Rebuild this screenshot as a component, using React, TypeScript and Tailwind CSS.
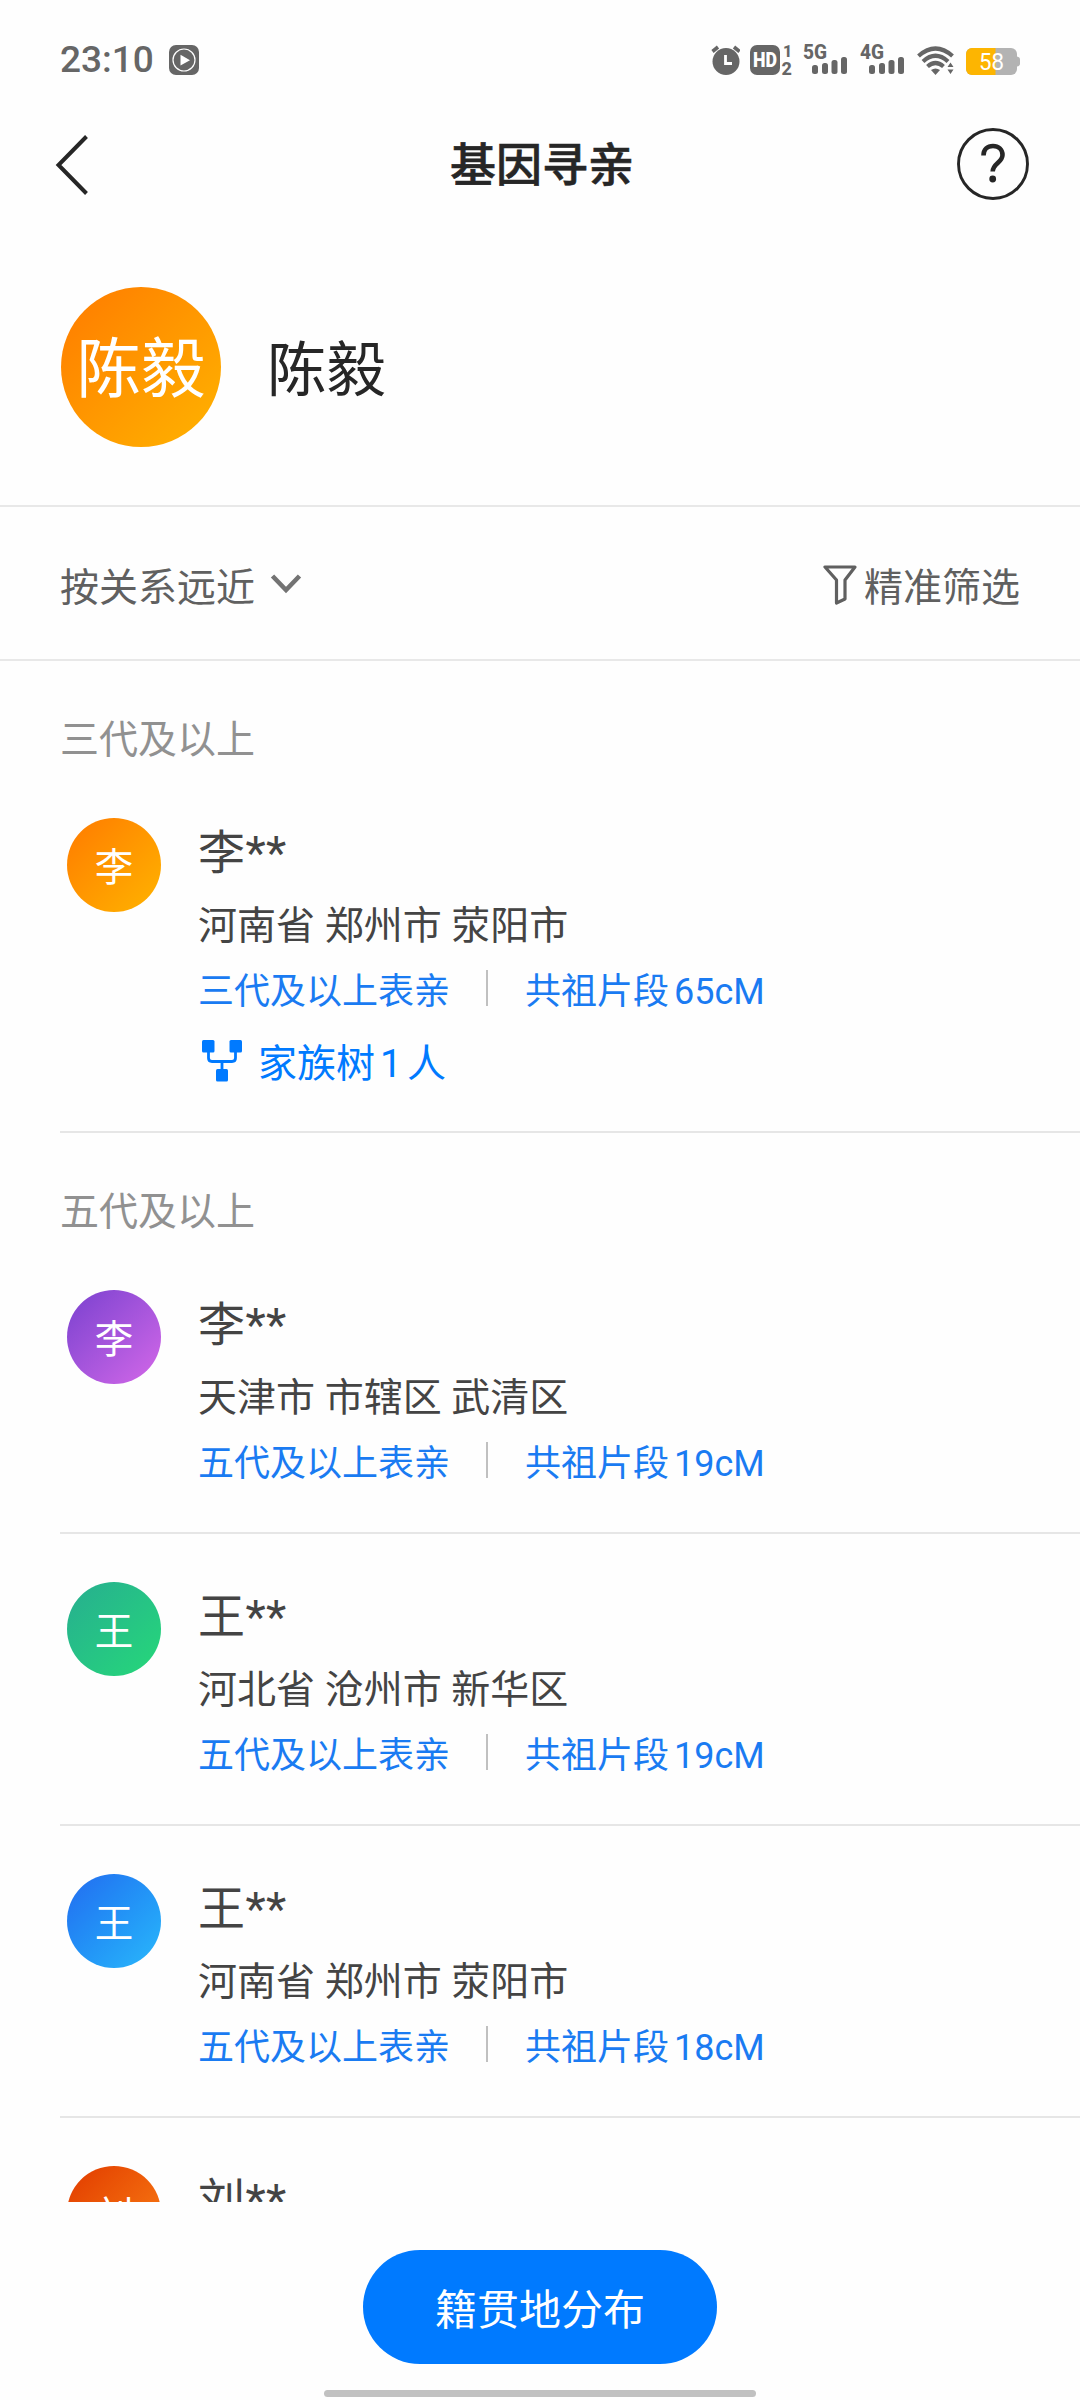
import React from 'react';

type Relative = {
  initial: string;
  name: string;
  place?: string;
  relation?: string;
  segment?: string;
  gradient: string;
  tree?: number;
};

const thirdGeneration: Relative[] = [
  {
    initial: '李',
    name: '李**',
    place: '河南省 郑州市 荥阳市',
    relation: '三代及以上表亲',
    segment: '65cM',
    gradient: 'from-[#ff7a00] to-[#ffb300]',
    tree: 1,
  },
];

const fifthGeneration: Relative[] = [
  {
    initial: '李',
    name: '李**',
    place: '天津市 市辖区 武清区',
    relation: '五代及以上表亲',
    segment: '19cM',
    gradient: 'from-[#7a40cf] to-[#d467e8]',
  },
  {
    initial: '王',
    name: '王**',
    place: '河北省 沧州市 新华区',
    relation: '五代及以上表亲',
    segment: '19cM',
    gradient: 'from-[#27ae8f] to-[#26d878]',
  },
  {
    initial: '王',
    name: '王**',
    place: '河南省 郑州市 荥阳市',
    relation: '五代及以上表亲',
    segment: '18cM',
    gradient: 'from-[#246bf0] to-[#2bb8fb]',
  },
  {
    initial: '刘',
    name: '刘**',
    gradient: 'from-[#e13800] to-[#fb8015]',
  },
];

function Signal({ label }: { label: string }) {
  return (
    <svg className="h-[32px] w-[46px] overflow-visible" viewBox="0 0 46 32" fill="#666">
      <text x="0" y="16" fontSize="21" fontWeight="800" fontFamily="Roboto, sans-serif" textLength="24" lengthAdjust="spacingAndGlyphs">
        {label}
      </text>
      <rect x="9" y="22" width="6" height="9" rx="2.5" />
      <rect x="19" y="20" width="6" height="11" rx="2.5" />
      <rect x="28.5" y="17" width="6" height="14" rx="2.5" />
      <rect x="38" y="14" width="6" height="17" rx="2.5" />
    </svg>
  );
}

function StatusBar() {
  return (
    <div className="flex h-[120px] items-start justify-between pt-[43px] pl-[60px] pr-[60px]">
      <div className="flex items-center">
        <span className="w-[109px] text-[37px] leading-[34px] font-medium text-[#666]">23:10</span>
        <svg className="h-[30px] w-[30px]" viewBox="0 0 30 30">
          <rect width="30" height="30" rx="7" fill="#666" />
          <circle cx="15" cy="15" r="11" fill="none" stroke="#fff" strokeWidth="1.2" />
          <path d="M11.5 9.8v10.8l9.5-5.4z" fill="#fff" />
        </svg>
      </div>
      <div className="flex items-start">
        {/* alarm */}
        <svg className="mr-[9px] h-[32px] w-[30px]" viewBox="0 0 30 32">
          <circle cx="16" cy="18.5" r="13.5" fill="#666" />
          <path d="M2.5 8.5L8 4M29.5 8.5L24 4" stroke="#666" strokeWidth="3.6" />
          <path d="M15.5 12v8.500h6.500" fill="none" stroke="#fff" strokeWidth="2.8" />
        </svg>
        {/* HD voice */}
        <svg className="mr-[11px] h-[32px] w-[43px] overflow-visible" viewBox="0 0 43 32">
          <rect x="1" y="2" width="30" height="30" rx="7" fill="#666" />
          <text x="4" y="24" fontSize="19.5" fontWeight="900" fill="#fff" fontFamily="Roboto, sans-serif" textLength="24" lengthAdjust="spacingAndGlyphs">
            HD
          </text>
          <text x="34" y="14" fontSize="16" fontWeight="800" fill="#666" fontFamily="Roboto, sans-serif">1</text>
          <text x="32.5" y="31.5" fontSize="18" fontWeight="800" fill="#666" fontFamily="Roboto, sans-serif">2</text>
        </svg>
        <div className="mr-[11px]">
          <Signal label="5G" />
        </div>
        <div className="mr-[11px]">
          <Signal label="4G" />
        </div>
        <svg className="mr-[11px] h-[32px] w-[38px]" viewBox="0 0 38 32">
          <g fill="none" stroke="#666" strokeWidth="4.2">
            <path d="M1.5 13Q18.5-2 35.500 13" />
            <path d="M6 18.500Q18.500 7 31 18.500" />
            <path d="M10.500 23.500Q18.500 16.500 26.500 23.500" />
          </g>
          <path d="M14 27q4.500-3 9 0l-4.500 5z" fill="#666" />
          <path d="M30.500 24l3-4.500 3 4.500zM30.500 26.500h6l-3 4.500z" fill="#666" />
        </svg>
        <svg className="mt-[4px] h-[29px] w-[54px] overflow-visible" viewBox="0 0 54 29">
          <rect x="0" y="1" width="51" height="27" rx="6" fill="#b3b3b3" />
          <path d="M6 1h23.500v27H6a6 6 0 0 1-6-6V7a6 6 0 0 1 6-6z" fill="#fdb501" />
          <path d="M51 9.500q3 .5 3 3v4q0 2.500-3 3z" fill="#b3b3b3" />
          <text x="25.500" y="23" fontSize="24" textAnchor="middle" textLength="25" lengthAdjust="spacingAndGlyphs" fill="#fff" fontFamily="Roboto, sans-serif">58</text>
        </svg>
      </div>
    </div>
  );
}

function TreeIcon() {
  return (
    <svg className="mt-px h-[42px] w-[40px]" viewBox="0 0 40 42" fill="#007aff">
      <rect x="0" y="0" width="12.500" height="12.500" rx="1.500" />
      <rect x="27.500" y="0" width="12.500" height="12.500" rx="1.500" />
      <rect x="14" y="29" width="12" height="12.500" rx="1.500" />
      <path d="M6.500 12v6q0 3.500 3.500 3.500h20q3.500 0 3.500-3.500v-6M20 21.500V30" fill="none" stroke="#007aff" strokeWidth="2.800" />
    </svg>
  );
}

function RelativeRow({ person }: { person: Relative }) {
  return (
    <div className="flex h-[243px] pl-[67px] pt-[48px]">
      <div className={`flex h-[94px] w-[94px] shrink-0 items-center justify-center rounded-full bg-linear-to-br pt-[6px] text-[38.500px] leading-[54px] text-white ${person.gradient}`}>
        <span>{person.initial}</span>
      </div>
      <div className="ml-[37px] pt-[5px] text-[#444]">
        <p className="h-[73px] text-[47px] leading-[60px] tracking-[0.4px]">{person.name}</p>
        {person.place && <p className="h-[68px] text-[39px] leading-[60px]">{person.place}</p>}
        {person.relation && (
          <div className="flex h-[51px] items-center text-[36px] leading-[50px] text-[#1a7bf2]">
            <span className="pt-[4px]">{person.relation}</span>
            <span className="mr-[37px] mb-[3px] ml-[36px] h-[36px] w-[2px] bg-[#c0c0c0]" />
            <span className="pt-[4px]">共祖片段</span>
            <span className="ml-[5px] pt-[4px]">{person.segment}</span>
          </div>
        )}
        {person.tree && (
          <div className="flex h-[71px] items-start pt-[24px] text-[39px] leading-[48px] text-[#007aff]">
            <div className="ml-[4px] mr-[16px]">
              <TreeIcon />
            </div>
            <span className="pt-px">家族树</span>
            <span className="mx-[5px] pt-px">{person.tree}</span>
            <span className="pt-px">人</span>
          </div>
        )}
      </div>
    </div>
  );
}

function Section({ title, people }: { title: string; people: Relative[] }) {
  return (
    <section>
      <h2 className="-mb-[1px] h-[110px] pt-[52px] pl-[60px] text-[39px] leading-[54px] text-[#919191]">{title}</h2>
      {people.map((person, i) => (
        <div key={i} className={person.tree ? 'flex h-[363px] flex-col justify-between' : 'flex h-[292px] flex-col justify-between'}>
          <RelativeRow person={person} />
          <div className="ml-[60px] h-[2px] bg-[#e6e6e6]" />
        </div>
      ))}
    </section>
  );
}

export default function App() {
  return (
    <div className="flex h-[2400px] w-[1080px] flex-col overflow-hidden bg-[#fefefe] font-[Roboto,'Noto_Sans_CJK_SC',sans-serif]">
      <StatusBar />

      <header className="flex h-[88px] items-center justify-between pr-[51px] pl-[55px]">
        <svg className="mt-[2px] h-[60px] w-[72px]" viewBox="0 0 72 60" fill="none" stroke="#262626" strokeWidth="4">
          <path d="M31.500 1.500L3.500 30L31.500 58.500" />
        </svg>
        <h1 className="mt-[2px] text-[46px] leading-[60px] font-medium text-[#262626] [-webkit-text-stroke:0.6px_#262626]">基因寻亲</h1>
        <svg className="h-[72px] w-[72px]" viewBox="0 0 72 72" fill="none" stroke="#262626">
          <circle cx="36" cy="36" r="34.500" strokeWidth="2.900" />
          <path d="M26.500 27.500c0-6 4-9.500 9.500-9.500s9.500 3.500 9.500 9c0 7.500-9.800 8.500-9.800 16.500" strokeWidth="4.600" />
          <circle cx="35.700" cy="51" r="3.400" fill="#262626" stroke="none" />
        </svg>
      </header>

      <div className="flex h-[299px] items-start border-b-2 border-[#e8e8e8] pt-[79px] pl-[61px]">
        <div className="flex h-[160px] w-[160px] items-center justify-center rounded-full bg-linear-to-br from-[#ff7a00] to-[#ffb300] pt-[5px] text-[64.500px] leading-[80px] text-white">
          <span>陈毅</span>
        </div>
        <span className="mt-[44px] ml-[46px] text-[59.500px] leading-[80px] text-[#262626]">陈毅</span>
      </div>

      <div className="flex h-[154px] items-center justify-between border-b-2 border-[#e8e8e8] px-[60px] text-[39px] leading-[54px] text-[#606060]">
        <div className="flex items-center">
          <span className="pt-[10px]">按关系远近</span>
          <svg className="mt-[2px] ml-[15px] h-[20px] w-[32px]" viewBox="0 0 32 20" fill="none" stroke="#737373" strokeWidth="4.600">
            <path d="M2.500 2L16 16L29.500 2" />
          </svg>
        </div>
        <div className="flex items-center">
          <svg className="mt-[4px] mr-[7px] h-[40px] w-[34px]" viewBox="0 0 34 40" fill="none" stroke="#606060" strokeWidth="3.200" strokeLinejoin="round">
            <path d="M2 2H32L22 15V34L13.500 38V15Z" />
          </svg>
          <span className="pt-[10px]">精准筛选</span>
        </div>
      </div>

      <main className="h-[1541px] shrink-0 overflow-hidden">
        <Section title="三代及以上" people={thirdGeneration} />
        <Section title="五代及以上" people={fifthGeneration} />
      </main>

      <footer className="flex flex-1 flex-col items-center pt-[48px]">
        <button className="h-[114px] w-[354px] shrink-0 rounded-full bg-[#007aff] pt-[8px] text-[42px] leading-[60px] text-white">籍贯地分布</button>
        <div className="mt-[26px] h-[7px] w-[432px] shrink-0 rounded-full bg-[#c1c1c1]" />
      </footer>
    </div>
  );
}
